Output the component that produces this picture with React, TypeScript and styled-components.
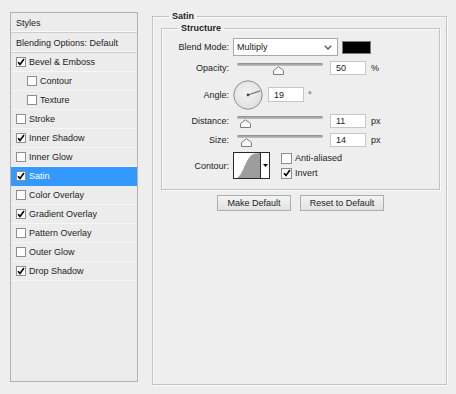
import React from "react";
import styled, { createGlobalStyle } from "styled-components";

const GlobalStyle = createGlobalStyle`
  html, body {
    margin: 0;
    padding: 0;
    background: #eeeeee;
  }
  body {
    font-family: "Liberation Sans", Arial, sans-serif;
    font-size: 9px;
    color: #1c1c1c;
  }
`;

const Window = styled.div`
  display: flex;
  align-items: flex-start;
  width: 456px;
  height: 394px;
  box-sizing: border-box;
  padding: 12px 0 0 10px;
`;

/* ---------- left: list of layer styles ---------- */

const StyleList = styled.div`
  width: 128px;
  height: 370px;
  box-sizing: border-box;
  border: 1px solid #b2b2b2;
  background: #ececec;
  display: flex;
  flex-direction: column;
`;

const HeaderRow = styled.div`
  height: 20px;
  box-sizing: border-box;
  padding-left: 5px;
  display: flex;
  align-items: center;
  border-bottom: 1px solid #cdcdcd;
  box-shadow: inset 0 -1px 0 #fafafa;
`;

const EffectRow = styled.div<{ $indent?: boolean; $active?: boolean }>`
  height: 19px;
  box-sizing: border-box;
  display: flex;
  align-items: center;
  gap: 3px;
  padding-left: ${(p) => (p.$indent ? 16 : 5)}px;
  background: ${(p) => (p.$active ? "#3399ff" : "transparent")};
  color: ${(p) => (p.$active ? "#ffffff" : "#1c1c1c")};
  border-bottom: 1px solid ${(p) => (p.$active ? "#3399ff" : "#f6f6f6")};
`;

const Box = styled.span<{ $size?: number }>`
  width: ${(p) => p.$size ?? 10}px;
  height: ${(p) => p.$size ?? 10}px;
  box-sizing: border-box;
  flex: none;
  border: 1px solid #8e8e8e;
  background: #ffffff;
  display: inline-flex;
  align-items: center;
  justify-content: center;
`;

const Check = ({ checked, size }: { checked?: boolean; size?: number }) => (
  <Box $size={size}>
    {checked && (
      <svg width="8" height="8" viewBox="0 0 8 8">
        <path d="M1 4.2 L3 6.4 L7 1" fill="none" stroke="#000" strokeWidth="1.6" />
      </svg>
    )}
  </Box>
);

/* ---------- right: effect settings ---------- */

const Group = styled.fieldset`
  margin: 0;
  border: 1px solid #c2c2c2;
  box-shadow: inset 1px 1px 0 #fbfbfb, 1px 1px 0 #fbfbfb;
  min-inline-size: 0;
`;

const OuterGroup = styled(Group)`
  margin: -2px 0 0 14px;
  width: 295px;
  height: 375px;
  box-sizing: border-box;
  padding: 0 6px 0 8px;
`;

const InnerGroup = styled(Group)`
  padding: 4px 0 10px 0;
  display: flex;
  flex-direction: column;
  gap: 5px;
`;

const Title = styled.legend<{ $offset: number }>`
  font-weight: bold;
  padding: 0 3px;
  margin-left: ${(p) => p.$offset}px;
  line-height: 12px;
`;

const Row = styled.div<{ $h: number }>`
  height: ${(p) => p.$h}px;
  display: flex;
  align-items: center;
`;

const Label = styled.span`
  width: 67px;
  margin-right: 4px;
  text-align: right;
  flex: none;
`;

const Select = styled.div`
  width: 105px;
  height: 18px;
  box-sizing: border-box;
  border: 1px solid #a9a9a9;
  background: #ffffff;
  display: flex;
  align-items: center;
  justify-content: space-between;
  padding: 0 5px 0 3px;
`;

const Swatch = styled.div`
  width: 29px;
  height: 13px;
  margin-left: 4px;
  box-sizing: border-box;
  border: 1px solid #7c7c7c;
  background: #000000;
`;

const Field = styled.div<{ $gap: number; $h?: number }>`
  width: 36px;
  height: ${(p) => p.$h ?? 14}px;
  box-sizing: border-box;
  margin-left: ${(p) => p.$gap}px;
  border: 1px solid #c6c6c6;
  background: #ffffff;
  padding-left: 5px;
  display: flex;
  align-items: center;
`;

const Unit = styled.span<{ $gap?: number }>`
  margin-left: ${(p) => p.$gap ?? 5}px;
`;

const SliderBox = styled.div`
  position: relative;
  width: 86px;
  height: 14px;
  margin-left: 4px;
  display: flex;
  flex-direction: column;
`;

const Track = styled.div`
  margin-top: 2px;
  height: 3px;
  border-radius: 2px;
  background: linear-gradient(#8c8c8c, #c4c4c4);
`;

const Thumb = styled.svg`
  position: absolute;
  top: 5px;
`;

const Slider = ({ value, max }: { value: number; max: number }) => (
  <SliderBox>
    <Track />
    <Thumb width="11" height="9" viewBox="0 0 11 9" style={{ left: (value / max) * 72 }}>
      <path d="M0.5 8.5 V4.5 L5.5 0.8 L10.5 4.5 V8.5 Z" fill="#fbfbfb" stroke="#7d7d7d" />
    </Thumb>
  </SliderBox>
);

const Dial = ({ angle }: { angle: number }) => {
  const r = (angle * Math.PI) / 180;
  const x = 15 + 13 * Math.cos(r);
  const y = 15 - 13 * Math.sin(r);
  return (
    <svg width="30" height="30" viewBox="0 0 30 30">
      <defs>
        <radialGradient id="dialFill" cx="0.45" cy="0.45" r="0.6">
          <stop offset="0" stopColor="#f4f4f4" />
          <stop offset="1" stopColor="#dedede" />
        </radialGradient>
      </defs>
      <circle cx="15" cy="15" r="14.2" fill="url(#dialFill)" stroke="#8f8f8f" />
      <line x1="15" y1="15" x2={x} y2={y} stroke="#5a5a5a" strokeWidth="1" />
      <circle cx="15" cy="15" r="1.4" fill="#4a4a4a" />
    </svg>
  );
};

const ContourPicker = styled.div`
  width: 37px;
  height: 27px;
  box-sizing: border-box;
  border: 1px solid #2a2a2a;
  background: #ffffff;
  display: flex;
  flex: none;
`;

const CurveCell = styled.div`
  width: 26px;
  border-right: 1px solid #2a2a2a;
  display: flex;
`;

const ArrowCell = styled.div`
  flex: 1;
  display: flex;
  align-items: center;
  justify-content: center;
`;

const Options = styled.div`
  margin-left: 11px;
  display: flex;
  flex-direction: column;
  gap: 4px;
`;

const Option = styled.label`
  display: flex;
  align-items: center;
  gap: 3px;
`;

const Buttons = styled.div`
  display: flex;
  justify-content: center;
  gap: 9px;
  margin-top: 5px;
`;

const Button = styled.button<{ $w: number }>`
  width: ${(p) => p.$w}px;
  height: 16px;
  padding: 0;
  font: inherit;
  color: #1c1c1c;
  border: 1px solid #adadad;
  background: linear-gradient(#f3f3f3, #e2e2e2);
`;

const effects = [
  { name: "Bevel & Emboss", checked: true },
  { name: "Contour", indent: true },
  { name: "Texture", indent: true },
  { name: "Stroke" },
  { name: "Inner Shadow", checked: true },
  { name: "Inner Glow" },
  { name: "Satin", checked: true, active: true },
  { name: "Color Overlay" },
  { name: "Gradient Overlay", checked: true },
  { name: "Pattern Overlay" },
  { name: "Outer Glow" },
  { name: "Drop Shadow", checked: true },
];

export default function App() {
  return (
    <>
      <GlobalStyle />
      <Window>
        <StyleList>
          <HeaderRow>Styles</HeaderRow>
          <HeaderRow>Blending Options: Default</HeaderRow>
          {effects.map((e) => (
            <EffectRow key={e.name} $indent={e.indent} $active={e.active}>
              <Check checked={e.checked} />
              {e.name}
            </EffectRow>
          ))}
        </StyleList>

        <OuterGroup>
          <Title $offset={8}>Satin</Title>
          <InnerGroup>
            <Title $offset={16}>Structure</Title>
            <Row $h={18}>
              <Label>Blend Mode:</Label>
              <Select>
                Multiply
                <svg width="8" height="5" viewBox="0 0 8 5">
                  <path d="M0.8 0.8 L4 4 L7.2 0.8" fill="none" stroke="#555" strokeWidth="1.3" />
                </svg>
              </Select>
              <Swatch />
            </Row>
            <Row $h={14}>
              <Label>Opacity:</Label>
              <Slider value={50} max={100} />
              <Field $gap={7}>50</Field>
              <Unit>%</Unit>
            </Row>
            <Row $h={29}>
              <Label>Angle:</Label>
              <Dial angle={19} />
              <Field $gap={5} $h={15}>19</Field>
              <Unit $gap={4}>°</Unit>
            </Row>
            <Row $h={14}>
              <Label>Distance:</Label>
              <Slider value={11} max={250} />
              <Field $gap={7}>11</Field>
              <Unit>px</Unit>
            </Row>
            <Row $h={14}>
              <Label>Size:</Label>
              <Slider value={14} max={250} />
              <Field $gap={7}>14</Field>
              <Unit>px</Unit>
            </Row>
            <Row $h={27}>
              <Label>Contour:</Label>
              <ContourPicker>
                <CurveCell>
                  <svg width="26" height="25" viewBox="0 0 26 25">
                    <path d="M3 25 C10 21 12 2 21 0.5 L26 0 L26 25 Z" fill="#9d9d9d" />
                  </svg>
                </CurveCell>
                <ArrowCell>
                  <svg width="5" height="3" viewBox="0 0 5 3">
                    <path d="M0 0 H5 L2.5 3 Z" fill="#000" />
                  </svg>
                </ArrowCell>
              </ContourPicker>
              <Options>
                <Option>
                  <Check size={11} />
                  Anti-aliased
                </Option>
                <Option>
                  <Check size={11} checked />
                  Invert
                </Option>
              </Options>
            </Row>
          </InnerGroup>
          <Buttons>
            <Button $w={74}>Make Default</Button>
            <Button $w={84}>Reset to Default</Button>
          </Buttons>
        </OuterGroup>
      </Window>
    </>
  );
}
